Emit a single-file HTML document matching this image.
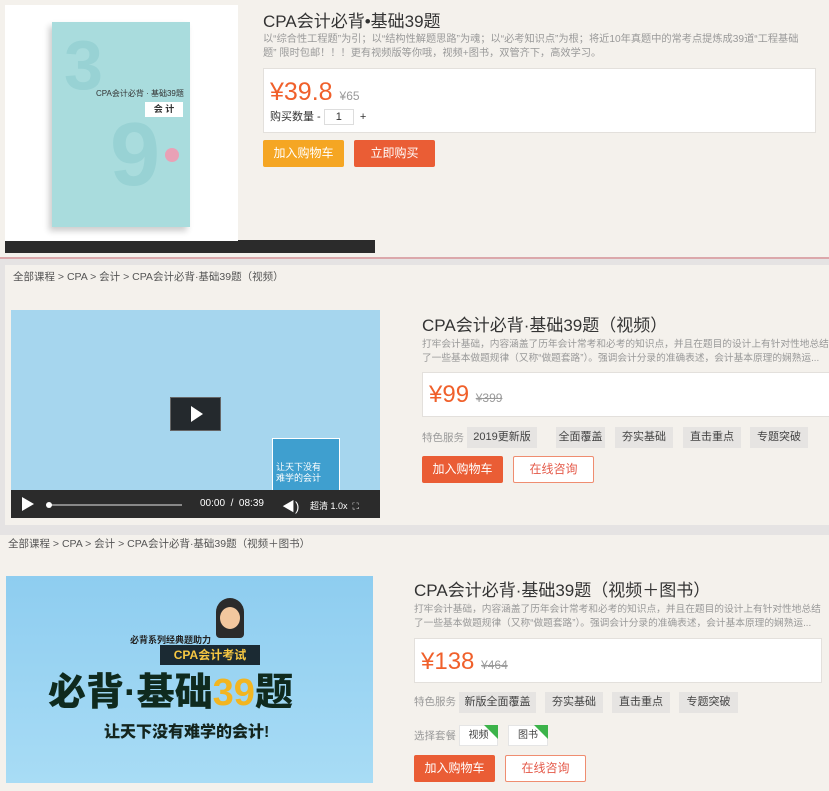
<!DOCTYPE html>
<html><head><meta charset="utf-8"><style>
*{margin:0;padding:0;box-sizing:border-box}
body{width:829px;height:791px;background:#e5e3e3;font-family:"Liberation Sans","Noto Sans CJK SC",sans-serif;position:relative;overflow:hidden;color:#333}
.a{position:absolute}
.sec{background:#f4f1ec}
.t{font-size:17px;color:#333;white-space:nowrap}
.d{font-size:9.7px;color:#999;line-height:14px;white-space:nowrap;overflow:hidden}
.pb{background:#fff;border:1px solid #e3e0dc}
.pr{color:#f0602b;font-size:24px}
.op{color:#999;font-size:12px;text-decoration:line-through}
.tag{background:#e6e4e2;font-size:11px;color:#444;text-align:center;line-height:21px;height:21px}
.btn{font-size:12px;color:#fff;text-align:center;line-height:27px;height:27px;border-radius:2px}
.o{background:#ea5d35}
.w{background:#fff;border:1px solid #ef8d70;color:#e45a4a;line-height:25px}
.lab{font-size:10.5px;color:#999}
.bc{font-size:10.5px;color:#555;white-space:nowrap}
</style></head><body>
<div class="a sec" style="left:0;top:0;width:829px;height:258px"></div>
<div class="a" style="top:240px;left:5px;width:370px;height:13px;background:#2b2b2b"></div>
<div class="a" style="left:0;top:257px;width:829px;height:2px;background:#dba8ab"></div>
<div class="a" style="left:5px;top:5px;width:233px;height:236px;background:#fff"></div>
<div class="a" style="left:52px;top:22px;width:138px;height:205px;background:#a9dcdd;box-shadow:-3px 4px 6px rgba(0,0,0,.2)"></div>
<div class="a" style="left:64px;top:30px;font-size:70px;color:#98d2d4;font-weight:bold;line-height:70px">3</div>
<div class="a" style="left:110px;top:110px;font-size:90px;color:#98d2d4;font-weight:bold;line-height:90px">9</div>
<div class="a" style="left:96px;top:88px;font-size:8px;color:#333;white-space:nowrap">CPA会计必背 · 基础39题</div>
<div class="a" style="left:145px;top:102px;width:38px;height:15px;background:#fff;font-size:9px;font-weight:bold;text-align:center;line-height:15px">会 计</div>
<div class="a" style="left:165px;top:148px;width:14px;height:14px;border-radius:50%;background:#e9a1b6"></div>
<div class="a t" style="left:263px;top:7px">CPA会计必背•基础39题</div>
<div class="a d" style="left:263px;top:33px;width:550px;font-size:10.2px">以“综合性工程题”为引；以“结构性解题思路”为魂；以“必考知识点”为根；将近10年真题中的常考点提炼成39道“工程基础<br>题” 限时包邮！！！更有视频版等你哦，视频+图书，双管齐下，高效学习。</div>
<div class="a pb" style="left:263px;top:68px;width:553px;height:65px"></div>
<div class="a pr" style="left:270px;top:78px;font-size:25px">¥39.8 <span style="font-size:12px;color:#999">¥65</span></div>
<div class="a" style="left:270px;top:108px;font-size:11px;color:#333">购买数量 - <span style="display:inline-block;width:30px;height:16px;border:1px solid #ddd;text-align:center;line-height:14px;background:#fff">1</span> &nbsp;+</div>
<div class="a btn" style="left:263px;top:140px;width:81px;background:#f5a623">加入购物车</div>
<div class="a btn o" style="left:354px;top:140px;width:81px">立即购买</div>
<div class="a sec" style="left:5px;top:265px;width:824px;height:260px"></div>
<div class="a bc" style="left:13px;top:269px">全部课程 &gt; CPA &gt; 会计 &gt; CPA会计必背·基础39题（视频）</div>
<div class="a" style="left:11px;top:310px;width:369px;height:181px;background:#a6d6ee"></div>
<div class="a" style="left:170px;top:397px;width:51px;height:34px;background:#24292d;border:1px solid #666"></div>
<div class="a" style="left:191px;top:406px;width:0;height:0;border-left:12px solid #fff;border-top:8px solid transparent;border-bottom:8px solid transparent"></div>
<div class="a" style="left:272px;top:438px;width:68px;height:53px;background:#3f9fcf;border:1px solid #fff"></div>
<div class="a" style="left:276px;top:462px;font-size:9px;color:#fff;line-height:11px">让天下没有<br>难学的会计</div>
<div class="a" style="left:11px;top:490px;width:369px;height:28px;background:#2b2b2b"></div>
<div class="a" style="left:22px;top:497px;width:0;height:0;border-left:12px solid #fff;border-top:7px solid transparent;border-bottom:7px solid transparent"></div>
<div class="a" style="left:48px;top:504px;width:134px;height:2px;background:#888"></div>
<div class="a" style="left:46px;top:502px;width:6px;height:6px;border-radius:50%;background:#fff"></div>
<div class="a" style="left:200px;top:498px;font-size:10px;color:#fff">00:00 &nbsp;/ &nbsp;08:39</div>
<div class="a" style="left:282px;top:496px;font-size:13px;color:#fff">◀)</div>
<div class="a" style="left:310px;top:499px;font-size:9px;color:#fff">超清 1.0x &nbsp;⛶</div>
<div class="a t" style="left:422px;top:311px">CPA会计必背·基础39题（视频）</div>
<div class="a d" style="left:422px;top:338px;width:407px">打牢会计基础，内容涵盖了历年会计常考和必考的知识点，并且在题目的设计上有针对性地总结<br>了一些基本做题规律（又称“做题套路”）。强调会计分录的准确表述，会计基本原理的娴熟运...</div>
<div class="a pb" style="left:422px;top:372px;width:410px;height:45px"></div>
<div class="a pr" style="left:429px;top:381px">¥99 <span class="op">¥399</span></div>
<div class="a lab" style="left:422px;top:430px">特色服务</div>
<div class="a tag" style="left:467px;top:427px;width:70px">2019更新版</div>
<div class="a tag" style="left:556px;top:427px;width:49px">全面覆盖</div>
<div class="a tag" style="left:615px;top:427px;width:58px">夯实基础</div>
<div class="a tag" style="left:683px;top:427px;width:58px">直击重点</div>
<div class="a tag" style="left:750px;top:427px;width:58px">专题突破</div>
<div class="a btn o" style="left:422px;top:456px;width:81px">加入购物车</div>
<div class="a btn w" style="left:513px;top:456px;width:81px">在线咨询</div>
<div class="a sec" style="left:0;top:535px;width:829px;height:256px"></div>
<div class="a bc" style="left:8px;top:536px">全部课程 &gt; CPA &gt; 会计 &gt; CPA会计必背·基础39题（视频＋图书）</div>
<div class="a" style="left:6px;top:576px;width:367px;height:207px;background:linear-gradient(#8ecdf0,#a8dcf5)"></div>
<div class="a" style="left:130px;top:633px;font-size:9px;font-weight:bold;color:#222">必背系列经典题助力</div>
<div class="a" style="left:216px;top:598px;width:28px;height:40px;border-radius:14px 14px 4px 4px;background:#2b2b2b"></div>
<div class="a" style="left:220px;top:607px;width:20px;height:22px;border-radius:50%;background:#f2c79e"></div>
<div class="a" style="left:160px;top:645px;width:100px;height:20px;background:#1b2a33;color:#f7c843;font-size:12px;font-weight:bold;text-align:center;line-height:20px">CPA会计考试</div>
<div class="a" style="left:48px;top:670px;font-size:38px;font-weight:900;color:#0f2a1e;white-space:nowrap;line-height:46px">必背·基础<span style="color:#f2b521">39</span>题</div>
<div class="a" style="left:104px;top:718px;font-size:16px;font-weight:900;color:#14251e;white-space:nowrap">让天下没有难学的会计!</div>
<div class="a t" style="left:414px;top:576px">CPA会计必背·基础39题（视频＋图书）</div>
<div class="a d" style="left:414px;top:603px;width:415px">打牢会计基础，内容涵盖了历年会计常考和必考的知识点，并且在题目的设计上有针对性地总结<br>了一些基本做题规律（又称“做题套路”）。强调会计分录的准确表述，会计基本原理的娴熟运...</div>
<div class="a pb" style="left:414px;top:638px;width:408px;height:45px"></div>
<div class="a pr" style="left:421px;top:648px">¥138 <span class="op">¥464</span></div>
<div class="a lab" style="left:414px;top:694px">特色服务</div>
<div class="a tag" style="left:459px;top:692px;width:77px">新版全面覆盖</div>
<div class="a tag" style="left:545px;top:692px;width:58px">夯实基础</div>
<div class="a tag" style="left:612px;top:692px;width:58px">直击重点</div>
<div class="a tag" style="left:679px;top:692px;width:59px">专题突破</div>
<div class="a lab" style="left:414px;top:728px">选择套餐</div>
<div class="a" style="left:459px;top:725px;width:39px;height:21px;background:#fff;border:1px solid #e5e5e5;font-size:10px;text-align:center;line-height:20px;color:#444">视频</div>
<div class="a" style="left:484px;top:725px;width:0;height:0;border-top:14px solid #3cb34a;border-left:14px solid transparent"></div>
<div class="a" style="left:508px;top:725px;width:40px;height:21px;background:#fff;border:1px solid #e5e5e5;font-size:10px;text-align:center;line-height:20px;color:#444">图书</div>
<div class="a" style="left:534px;top:725px;width:0;height:0;border-top:14px solid #3cb34a;border-left:14px solid transparent"></div>
<div class="a btn o" style="left:414px;top:755px;width:81px">加入购物车</div>
<div class="a btn w" style="left:505px;top:755px;width:81px">在线咨询</div>
</body></html>
